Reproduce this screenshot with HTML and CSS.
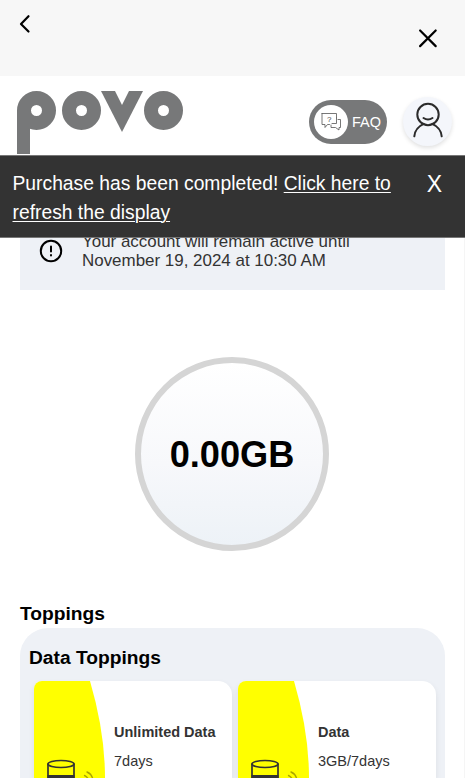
FILE: index.html
```html
<!DOCTYPE html>
<html lang="en">
<head>
  <meta charset="utf-8">
  <title>povo</title>
  <link rel="stylesheet" href="styles.css">
</head>
<body>
  <div class="top-bar">
    <svg class="back" width="12" height="20" viewBox="0 0 12 20">
      <path d="M9.5 2.2 2 9.900l7.500 7.600"/>
    </svg>
    <svg class="close" width="20" height="20" viewBox="0 0 20 20">
      <path d="M2.100 2.500l15.600 15.600M17.700 2.500 2.100 18.100"/>
    </svg>
  </div>

  <header class="header">
    <div class="logo" role="img" aria-label="povo">
      <div class="ring ring-stem"></div>
      <div class="ring"></div>
      <div class="wedge"></div>
      <div class="ring"></div>
    </div>
    <div class="faq">
      <div class="faq-icon">
        <svg width="22" height="20" viewBox="0 0 22 20">
          <path d="M2 1.500h14.500v4.500M9.500 12.500h-2l-2.500 3v-3H2v-11M16.500 6v5.500h-4.500M18 7.500h2.500v8h-1.500v2.500l-3.500-2.500h-4.500v-2.500"/>
          <text x="6.900" y="9.500">?</text>
        </svg>
      </div>
      <span>FAQ</span>
    </div>
    <div class="avatar">
      <svg width="32" height="36" viewBox="0 0 32 36">
        <circle cx="16" cy="12.500" r="10.700"/>
        <path d="M11.500 16q4.500 3.100 9 0M2.300 34.300C2.900 28 6.500 24.300 11.700 21.900M29.700 34.300C29.100 28 25.500 24.300 20.300 21.900"/>
      </svg>
    </div>
  </header>

  <div class="toast">
    <p>Purchase has been completed! <a href="#">Click here to refresh the display</a></p>
    <span class="toast-close">X</span>
  </div>

  <main class="content">
    <div class="notice">
      <svg width="24" height="24" viewBox="0 0 24 24">
        <circle cx="12" cy="12" r="10.200"/>
        <path d="M12 7.500v5M12 16v.5"/>
      </svg>
      <p>Your account will remain active until<br>November 19, 2024 at 10:30 AM</p>
    </div>

    <div class="gauge">0.00GB</div>

    <h2>Toppings</h2>
    <section class="toppings">
      <h3>Data Toppings</h3>
      <div class="cards">
        <div class="card">
          <svg class="card-art" width="72" height="97" viewBox="0 0 72 97">
            <path class="curve" d="M0 0h56Q71 51 71 97H0z"/>
            <path class="can-fill" d="M13.500 94h27v3h-27z"/>
            <path class="can" d="M14 83v14M40 83v14"/>
            <ellipse class="can" cx="27" cy="83" rx="13" ry="3.500"/>
            <path class="waves" d="M50.500 94.500q4 2 4.500 6M53 91q5 2 6 8"/>
          </svg>
          <div class="card-text">
            <strong>Unlimited Data</strong>
            <span>7days</span>
          </div>
        </div>
        <div class="card">
          <svg class="card-art" width="72" height="97" viewBox="0 0 72 97">
            <path class="curve" d="M0 0h56Q71 51 71 97H0z"/>
            <path class="can-fill" d="M13.500 94h27v3h-27z"/>
            <path class="can" d="M14 83v14M40 83v14"/>
            <ellipse class="can" cx="27" cy="83" rx="13" ry="3.500"/>
            <path class="waves" d="M50.500 94.500q4 2 4.500 6M53 91q5 2 6 8"/>
          </svg>
          <div class="card-text">
            <strong>Data</strong>
            <span>3GB/7days</span>
          </div>
        </div>
      </div>
    </section>
  </main>
</body>
</html>
```

FILE: styles.css
```css
* {
  box-sizing: border-box;
}

body {
  position: relative;
  height: 778px;
  margin: 0;
  overflow: hidden;
  background: #fff;
  color: #000;
  font-family: "Liberation Sans", Arial, sans-serif;
}

p, h2, h3 {
  margin: 0;
}

svg {
  display: block;
  flex: none;
  fill: none;
  stroke-linecap: round;
  stroke-linejoin: round;
}

.top-bar {
  display: flex;
  justify-content: space-between;
  height: 76px;
  padding: 14px 27px 0 18.500px;
  background: #f7f7f7;
  stroke: #000;
  stroke-width: 2.2;
}

.close {
  margin-top: 14px;
}

.header {
  display: flex;
  align-items: flex-start;
  height: 79px;
  padding: 14px 13px 0 17px;
}

.logo {
  display: flex;
  flex: 1;
  padding-top: 0.5px;
}

/* thick ring with a small hole */
.ring {
  width: 39.300px;
  height: 39.300px;
  border: 14px solid #777879;
  border-radius: 50%;
}

.ring-stem {
  position: relative;
  margin-right: 5.500px;
}

.ring-stem::after {
  content: "";
  position: absolute;
  left: -14px;
  top: 5.500px;
  width: 13px;
  height: 44px;
  background: #777879;
}

.wedge {
  position: relative;
  margin-right: 0.7px;
  border: solid transparent;
  border-width: 41px 21.500px 0;
  border-top-color: #777879;
}

.wedge::after {
  content: "";
  position: absolute;
  left: -7.500px;
  top: -41px;
  border: solid transparent;
  border-width: 14px 7.500px 0;
  border-top-color: #fff;
}

.faq {
  display: flex;
  align-items: center;
  gap: 4px;
  width: 78px;
  height: 44px;
  margin: 10px 16px 0 0;
  padding-left: 5px;
  border-radius: 22px;
  background: #777879;
  color: #fff;
  font-size: 14.500px;
}

.faq-icon {
  display: grid;
  place-items: center;
  width: 34px;
  height: 34px;
  border-radius: 50%;
  background: #fff;
  stroke: #555;
  stroke-width: 0.8;
}

.faq-icon text {
  fill: #444;
  stroke: none;
  font-size: 8px;
}

.avatar {
  display: grid;
  place-items: center;
  width: 49px;
  height: 49px;
  margin-top: 7px;
  border-radius: 50%;
  background: #f4f6fb;
  box-shadow: 0 2px 4px rgba(0, 0, 0, 0.12);
  stroke: #2b2b2b;
  stroke-width: 2;
}

.avatar svg {
  margin-bottom: 3px;
}

.toast {
  position: absolute;
  top: 155px;
  left: 0;
  display: flex;
  justify-content: space-between;
  width: 465px;
  height: 83px;
  padding: 13px 23px 0 12.500px;
  border: solid #777;
  border-width: 1px 0;
  background: #333;
  color: #fff;
  font-size: 19.300px;
  line-height: 29px;
}

.toast p {
  width: 390px;
}

.toast a {
  color: #fff;
  text-underline-offset: 2px;
  text-decoration-thickness: 1px;
}

.toast-close {
  padding-top: 1px;
  font-size: 23px;
}

.content {
  padding: 0 19px 0 20px;
  border-right: 1px solid #f5f5f5;
}

.notice {
  display: flex;
  align-items: center;
  gap: 19px;
  height: 134.500px;
  padding: 57px 19px 0;
  background: #eef1f6;
  color: #333;
  font-size: 16.950px;
  line-height: 19px;
}

.notice svg {
  stroke: #000;
  stroke-width: 2;
}

.gauge {
  display: grid;
  place-items: center;
  width: 194px;
  height: 194px;
  margin: 67.500px auto 50px 115px;
  padding-top: 2px;
  border: 6px solid #d5d5d5;
  border-radius: 50%;
  background: linear-gradient(#fff, #f7f8fb 55%, #edf2f7);
  font-size: 36.200px;
  font-weight: bold;
}

h2 {
  margin-bottom: 2px;
  font-size: 19.200px;
  line-height: 25px;
}

.toppings {
  height: 150px;
  padding: 18px 9px 0;
  overflow: hidden;
  border-radius: 28px 28px 0 0;
  background: #eef1f6;
}

h3 {
  font-size: 19.200px;
  line-height: 24px;
}

.cards {
  display: grid;
  grid-template-columns: 1fr 1fr;
  gap: 6px;
  margin-top: 11px;
  padding-left: 5px;
}

.card {
  display: flex;
  gap: 8px;
  height: 97px;
  overflow: hidden;
  border-radius: 8px 14px 0 0;
  background: #fff;
  box-shadow: 0 3px 6px rgba(0, 0, 0, 0.08);
}

.card-text {
  display: flex;
  flex-direction: column;
  gap: 11px;
  padding-top: 42px;
  color: #333;
  font-size: 14.500px;
  line-height: 18px;
  white-space: nowrap;
}

.curve {
  fill: #ff0;
}

.can {
  stroke: #333;
  stroke-width: 1.7;
}

.can-fill {
  fill: #333;
}

.waves {
  stroke: #aaa500;
  stroke-width: 1.4;
}
```
